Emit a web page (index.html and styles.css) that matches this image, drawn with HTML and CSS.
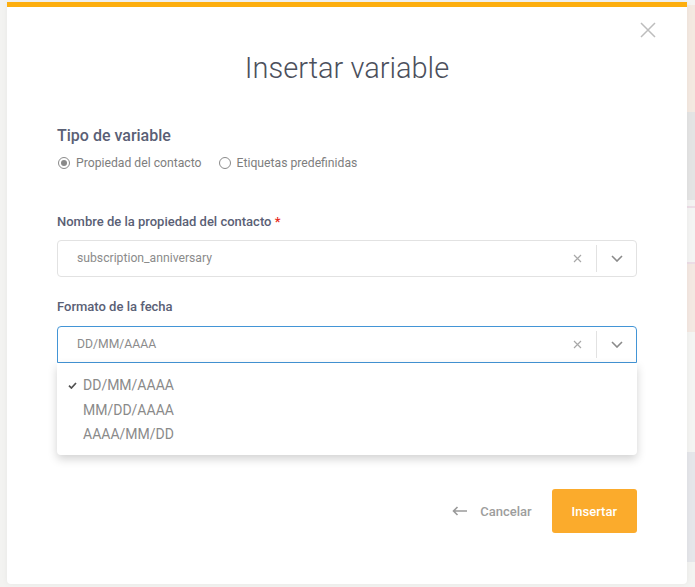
FILE: index.html
```html
<!DOCTYPE html>
<html lang="es">
<head>
<meta charset="utf-8">
<title>Insertar variable</title>
<link rel="stylesheet" href="styles.css">
</head>
<body>
<div class="page">
  <div class="gutter"></div>
  <div class="modal">
    <button class="close" aria-label="Cerrar">
      <svg width="16" height="16" viewBox="0 0 16 16"><path d="M1 1L15 15M15 1L1 15" stroke="#bdbdbd" stroke-width="1.5" fill="none"/></svg>
    </button>
    <h1 class="title">Insertar variable</h1>

    <h2 class="section-title">Tipo de variable</h2>
    <div class="radios">
      <label class="radio"><span class="radio-dot checked"></span>Propiedad del contacto</label>
      <label class="radio"><span class="radio-dot"></span>Etiquetas predefinidas</label>
    </div>

    <div class="field field-first">
      <div class="field-label">Nombre de la propiedad del contacto <span class="req">*</span></div>
      <div class="select">
        <span class="select-value">subscription_anniversary</span>
        <span class="select-clear"><svg width="9" height="9" viewBox="0 0 9 9"><path d="M1 1L8 8M8 1L1 8" stroke="#a8a8a8" stroke-width="1.2" fill="none"/></svg></span>
        <span class="select-sep"></span>
        <span class="select-arrow"><svg width="12" height="7" viewBox="0 0 12 7"><path d="M1 1L6 6L11 1" stroke="#8a8a8a" stroke-width="1.6" fill="none"/></svg></span>
      </div>
    </div>

    <div class="field field-second">
      <div class="field-label">Formato de la fecha</div>
      <div class="select-wrap">
        <div class="select focused">
          <span class="select-value">DD/MM/AAAA</span>
          <span class="select-clear"><svg width="9" height="9" viewBox="0 0 9 9"><path d="M1 1L8 8M8 1L1 8" stroke="#a8a8a8" stroke-width="1.2" fill="none"/></svg></span>
          <span class="select-sep"></span>
          <span class="select-arrow"><svg width="12" height="7" viewBox="0 0 12 7"><path d="M1 1L6 6L11 1" stroke="#8a8a8a" stroke-width="1.6" fill="none"/></svg></span>
        </div>
        <ul class="menu">
          <li class="option"><span class="check"><svg width="9" height="7" viewBox="0 0 9 7"><path d="M1 3.6L3.4 6L8 1" stroke="#505050" stroke-width="1.7" fill="none"/></svg></span>DD/MM/AAAA</li>
          <li class="option"><span class="check"></span>MM/DD/AAAA</li>
          <li class="option"><span class="check"></span>AAAA/MM/DD</li>
        </ul>
      </div>
    </div>

    <div class="footer">
      <button class="btn-cancel">
        <svg width="16" height="10" viewBox="0 0 16 10"><path d="M15 5H1.5M5.5 1L1.5 5L5.5 9" stroke="#9a9a9a" stroke-width="1.6" fill="none"/></svg>
        <span>Cancelar</span>
      </button>
      <button class="btn-primary">Insertar</button>
    </div>
  </div>
  <div class="backdrop-strip">
    <div class="strip s-top"></div>
    <div class="strip s-peach"></div>
    <div class="strip s-grey"></div>
    <div class="strip s-light"></div>
    <div class="strip s-pinkline"></div>
    <div class="strip s-pale"></div>
    <div class="strip s-pinkline"></div>
    <div class="strip s-circle"></div>
    <div class="strip s-light2"></div>
    <div class="strip s-blue"></div>
    <div class="strip s-end"></div>
  </div>
</div>
</body>
</html>
```

FILE: styles.css
```css
* { box-sizing: border-box; }
html, body { margin: 0; padding: 0; }
body {
  background: #f3f3f1;
  font-family: Roboto, "Liberation Sans", Arial, sans-serif;
  width: 695px;
  height: 587px;
  overflow: hidden;
}
.page {
  display: flex;
  align-items: flex-start;
  height: 587px;
}
.gutter {
  width: 7px;
  flex: none;
}
.modal {
  position: relative;
  width: 680px;
  height: 582px;
  margin-top: 2px;
  flex: none;
  background: #fff;
  border-top: 5px solid #fdae0e;
  border-radius: 0 0 4px 4px;
  box-shadow: 0 0 6px rgba(0,0,0,0.05);
  padding: 45px 50px 0 50px;
}
.close {
  position: absolute;
  top: 15px;
  right: 31px;
  width: 16px;
  height: 16px;
  padding: 0;
  border: 0;
  background: none;
  display: flex;
}
.title {
  margin: 0;
  text-align: center;
  font-weight: 300;
  font-size: 29px;
  line-height: 32px;
  color: #4c505c;
}
.section-title {
  margin: 42px 0 0 0;
  font-size: 16px;
  font-weight: 500;
  line-height: 20px;
  color: #5a6075;
}
.radios {
  display: flex;
  gap: 16px;
  margin-top: 8px;
}
.radio {
  display: flex;
  align-items: center;
  gap: 6px;
  font-size: 12.2px;
  line-height: 18px;
  color: #7e7e7e;
}
.radio-dot {
  width: 12px;
  height: 12px;
  border: 1px solid #8a8a8a;
  border-radius: 50%;
  display: flex;
  align-items: center;
  justify-content: center;
  margin-left: 1px;
}
.radio-dot.checked::after {
  content: "";
  width: 6px;
  height: 6px;
  border-radius: 50%;
  background: #8a8a8a;
}
.field-first { margin-top: 41px; }
.field-second { margin-top: 21px; }
.field-label {
  font-size: 13px;
  font-weight: 500;
  line-height: 18px;
  color: #5a6075;
  margin-bottom: 9px;
}
.field-second .field-label { margin-bottom: 10px; }
.req { color: #e8291c; }
.select-wrap { position: relative; }
.select {
  display: flex;
  align-items: center;
  height: 37px;
  border: 1px solid #e2e2e2;
  border-radius: 4px;
  background: #fff;
}
.select.focused {
  border-color: #4395d6;
  border-radius: 4px 4px 0 0;
}
.select-value {
  flex: 1;
  padding-left: 19px;
  font-size: 12.2px;
  color: #8b8b8b;
  line-height: 35px;
}
.select-clear {
  width: 20px;
  display: flex;
  justify-content: center;
  margin-right: 9px;
}
.select-sep {
  width: 1px;
  align-self: stretch;
  margin: 4px 0;
  background: #e2e2e2;
}
.select-arrow {
  width: 39px;
  display: flex;
  justify-content: center;
}
.menu {
  position: absolute;
  left: 0;
  right: 0;
  top: 37px;
  margin: 0;
  padding: 10px 0 8px 0;
  list-style: none;
  background: #fff;
  border-radius: 0 0 4px 4px;
  box-shadow: 0 4px 10px rgba(0,0,0,0.18);
  z-index: 2;
}
.option {
  display: flex;
  align-items: center;
  padding-left: 11px;
  height: 24.5px;
  font-size: 14px;
  color: #8a8a8a;
}
.check {
  width: 15px;
  display: flex;
}
.footer {
  display: flex;
  justify-content: flex-end;
  align-items: center;
  margin-top: 126px;
  gap: 20px;
}
.btn-cancel {
  display: flex;
  align-items: center;
  gap: 12px;
  border: 0;
  background: none;
  padding: 0;
  font-family: inherit;
  font-size: 13px;
  font-weight: 500;
  color: #9d9d9d;
}
.btn-primary {
  height: 44px;
  padding: 0 20px;
  border: 0;
  border-radius: 3px;
  background: #fbab2c;
  color: #fff;
  font-family: inherit;
  font-size: 13px;
  font-weight: 500;
}
.backdrop-strip {
  flex: 1;
  display: flex;
  flex-direction: column;
  height: 587px;
}
.strip { flex: none; }
.s-top { height: 5px; background: #f5f4f2; }
.s-peach { height: 107px; background: #f4e9e1; }
.s-grey { height: 88px; background: #e4e4e4; }
.s-light { height: 6px; background: #f3f3f2; }
.s-pinkline { height: 2px; background: #ecdde6; }
.s-pale { height: 54px; background: #f4f4f3; }
.s-circle { height: 68px; background: #f4e8e2; }
.s-light2 { height: 120px; background: #f4f4f2; }
.s-blue { height: 110px; background: #e5e6ea; }
.s-end { height: 25px; background: #f3f3f1; }
```
